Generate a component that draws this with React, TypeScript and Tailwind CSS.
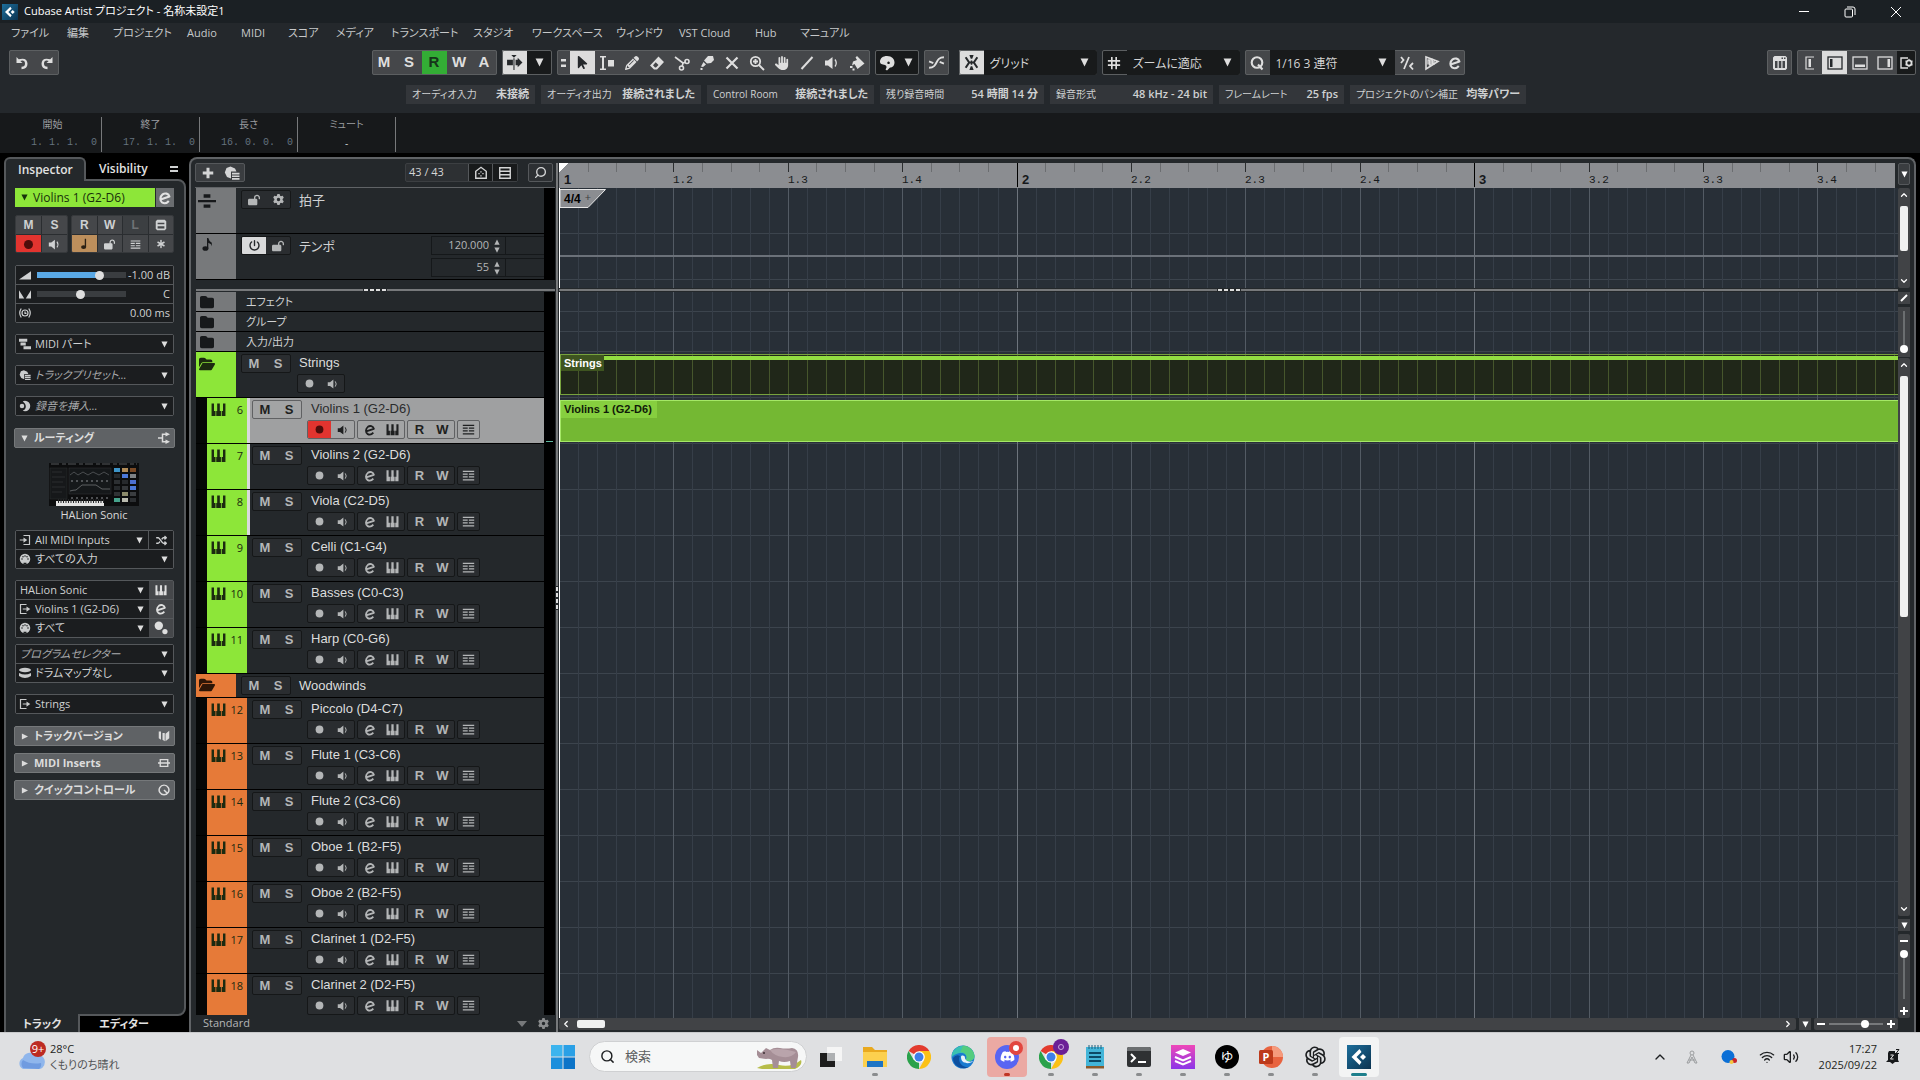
import type { ReactNode } from "react"
import { AiOutlineOpenAI } from "react-icons/ai"
import {
  FaArrowPointer,
  FaDiscord,
  FaFolder,
  FaFolderOpen,
  FaGear,
  FaHand,
  FaLockOpen,
  FaPencil,
  FaPowerOff,
  FaShuffle,
} from "react-icons/fa6"
import { Search, Wifi, Volume2, ChevronUp, ChevronDown, ChevronLeft, ChevronRight, Asterisk } from "lucide-react"

const BEAT = 114.4
const BEATS = 24

const menus = [
  { label: "ファイル", width: "w-14" },
  { label: "編集", width: "w-[46px]" },
  { label: "プロジェクト", width: "w-[74px]" },
  { label: "Audio", width: "w-[54px]" },
  { label: "MIDI", width: "w-[47px]" },
  { label: "スコア", width: "w-12" },
  { label: "メディア", width: "w-[55px]" },
  { label: "トランスポート", width: "w-[82px]" },
  { label: "スタジオ", width: "w-[59px]" },
  { label: "ワークスペース", width: "w-[84px]" },
  { label: "ウィンドウ", width: "w-[63px]" },
  { label: "VST Cloud", width: "w-[76px]" },
  { label: "Hub", width: "w-[45px]" },
  { label: "マニュアル", width: "w-16" },
]

const statusItems = [
  { label: "オーディオ入力", value: "未接続", width: "w-[129px]" },
  { label: "オーディオ出力", value: "接続されました", width: "w-40" },
  { label: "Control Room", value: "接続されました", width: "w-[167px]" },
  { label: "残り録音時間", value: "54 時間 14 分", width: "w-[164px]" },
  { label: "録音形式", value: "48 kHz - 24 bit", width: "w-[163px]" },
  { label: "フレームレート", value: "25 fps", width: "w-[125px]" },
  { label: "プロジェクトのパン補正", value: "均等パワー", width: "w-44" },
]

const infoCells = [
  { label: "開始", value: "1. 1. 1.  0" },
  { label: "終了", value: "17. 1. 1.  0" },
  { label: "長さ", value: "16. 0. 0.  0" },
]

const strings = [
  { no: 6, name: "Violins 1 (G2-D6)", selected: true, marked: true },
  { no: 7, name: "Violins 2 (G2-D6)", marked: true },
  { no: 8, name: "Viola (C2-D5)", marked: true },
  { no: 9, name: "Celli (C1-G4)" },
  { no: 10, name: "Basses (C0-C3)" },
  { no: 11, name: "Harp (C0-G6)" },
]

const woodwinds = [
  { no: 12, name: "Piccolo (D4-C7)" },
  { no: 13, name: "Flute 1 (C3-C6)" },
  { no: 14, name: "Flute 2 (C3-C6)" },
  { no: 15, name: "Oboe 1 (B2-F5)" },
  { no: 16, name: "Oboe 2 (B2-F5)" },
  { no: 17, name: "Clarinet 1 (D2-F5)" },
  { no: 18, name: "Clarinet 2 (D2-F5)" },
]

/* ---------- icons ---------- */

type IconProps = { className?: string }

function Svg({ children, className = "size-4", box = "0 0 16 16" }: { children: ReactNode; className?: string; box?: string }) {
  return (
    <svg viewBox={box} className={`shrink-0 ${className}`} fill="currentColor" aria-hidden="true">
      {children}
    </svg>
  )
}

function Tri({ className = "size-2" }: IconProps) {
  return (
    <Svg className={className} box="0 0 8 8">
      <path d="M0.5 0.5h7L4 7.5z" />
    </Svg>
  )
}

function TriRight({ className = "size-2" }: IconProps) {
  return (
    <Svg className={className} box="0 0 8 8">
      <path d="M1 0.5v7l7-3.5z" />
    </Svg>
  )
}

function EditE({ className = "size-4" }: IconProps) {
  return (
    <Svg className={className}>
      <path d="M3.6 9.6 12.4 6.6C11.6 3.4 8 2.6 5.6 4.4 2.8 6.6 2.8 10.8 5 12.4c2.2 1.4 5 .7 6.8-1.4" fill="none" stroke="currentColor" strokeWidth="2.1" strokeLinejoin="round" />
    </Svg>
  )
}

function Keys({ className = "size-4" }: IconProps) {
  return (
    <Svg className={className}>
      <path d="M.6 1.500h2.600v8h1.600v5.500H.6zM6.600 1.500h2.800v8h1.200v5.500H5.600V9.500h1zM12.800 1.500h2.600v13.500h-4V9.500h1.400z" />
    </Svg>
  )
}

function Speaker({ className = "size-4" }: IconProps) {
  return (
    <Svg className={className}>
      <path d="M1 5.500h3L8.500 2v12L4 10.500H1z" />
      <path d="M11 4.500q2.500 3.500 0 7" fill="none" stroke="currentColor" strokeWidth="1.300" />
    </Svg>
  )
}

function Rec({ className = "size-4" }: IconProps) {
  return (
    <Svg className={className}>
      <circle cx="8" cy="8" r="4.8" />
    </Svg>
  )
}

function Lanes({ className = "size-4" }: IconProps) {
  return (
    <Svg className={className}>
      <path d="M1 2h14v1.600H1zM1 5.500h6v1.600H1zM8.500 5.500H15v1.600H8.500zM1 9h6v1.600H1zM8.500 9H15v1.600H8.500zM1 12.500h14v1.600H1z" />
    </Svg>
  )
}

function Din({ className = "size-4" }: IconProps) {
  return (
    <Svg className={className}>
      <circle cx="8" cy="8" r="7" />
      <g fill="#1b1d1f">
        <circle cx="4" cy="8" r="1" />
        <circle cx="5.300" cy="5" r="1" />
        <circle cx="8" cy="4" r="1" />
        <circle cx="10.700" cy="5" r="1" />
        <circle cx="12" cy="8" r="1" />
        <path d="M6 13h4v2H6z" />
      </g>
    </Svg>
  )
}

function OutPort({ className = "size-4" }: IconProps) {
  return (
    <Svg className={className}>
      <path d="M10 2H2v12h8" fill="none" stroke="currentColor" strokeWidth="1.600" />
      <path d="M5 7.200h5V4.500L15 8l-5 3.500V8.800H5z" />
    </Svg>
  )
}

function InPort({ className = "size-4" }: IconProps) {
  return (
    <Svg className={className}>
      <path d="M6 2h8v12H6" fill="none" stroke="currentColor" strokeWidth="1.600" />
      <path d="M1 7.200h5V4.500L11 8l-5 3.500V8.800H1z" />
    </Svg>
  )
}

function Preset({ className = "size-4" }: IconProps) {
  return (
    <Svg className={className}>
      <path d="M6.500 1.500 11 3.500l1.500 3H7v7L3 12 .800 7.500 2.500 3z" />
      <path d="M8 7.800h7.500v1.700H8zM8 10.400h7.500v1.700H8zM8 13h7.500v1.700H8z" />
    </Svg>
  )
}

function CubaseLogo({ className = "size-4" }: IconProps) {
  return (
    <svg viewBox="0 0 24 24" className={`shrink-0 ${className}`} aria-hidden="true">
      <defs>
        <linearGradient id="cubase" x1="0" y1="0" x2="1" y2="1">
          <stop offset="0" stopColor="#1d6f9c" />
          <stop offset="1" stopColor="#0b3350" />
        </linearGradient>
      </defs>
      <path fill="url(#cubase)" d="M0 0h24v24H0z" />
      <path fill="#fff" d="M12.500 4 4.500 12l8 8 2-3-5-5 5-5z" />
      <path fill="#fff" d="m16 9 3 3-3 3-3-3z" />
    </svg>
  )
}

function ChromeLogo() {
  return (
    <svg viewBox="0 0 24 24" className="size-6" aria-hidden="true">
      <path fill="#e33b2e" d="M12 12 1.600 6A12 12 0 0 1 22.400 6H12z" />
      <path fill="#2aa14b" d="M12 12v12A12 12 0 0 1 1.600 6l5.200 9z" />
      <path fill="#fbc116" d="M12 6h10.400A12 12 0 0 1 12 24l5.200-9z" />
      <circle cx="12" cy="12" r="5.800" fill="#fff" />
      <circle cx="12" cy="12" r="4.500" fill="#3f7fe8" />
    </svg>
  )
}

/* ---------- small parts ---------- */

function ToolButton({ label, children, active, dark, className = "w-[25px]" }: { label: string; children: ReactNode; active?: boolean; dark?: boolean; className?: string }) {
  const tone = active ? "bg-[#dcdcdc] text-[#25282b]" : dark ? "bg-[#181a1b] text-[#dedede]" : "text-[#dedede]"
  return (
    <button type="button" aria-label={label} className={`flex h-full shrink-0 items-center justify-center ${tone} ${className}`}>
      {children}
    </button>
  )
}

function ToolGroup({ children }: { children: ReactNode }) {
  return <div className="flex h-[25px] shrink-0 overflow-hidden rounded-xs bg-[#45474a] outline-1 -outline-offset-1 outline-[#5c5f61]">{children}</div>
}

function ToolSelect({ label, value, className }: { label: string; value: string; className: string }) {
  return (
    <div className={`relative h-full shrink-0 bg-[#181a1b] ${className}`}>
      <select aria-label={label} className="h-full w-full appearance-none bg-transparent pr-6 pl-1.5 text-[12px] text-[#d4d4d4]">
        <option>{value}</option>
      </select>
      <Tri className="pointer-events-none absolute top-2 right-2 size-[9px] text-[#dedede]" />
    </div>
  )
}

function PanelSelect({ label, value, icon, italic, className = "flex-1" }: { label: string; value: string; icon?: ReactNode; italic?: boolean; className?: string }) {
  return (
    <div className={`relative flex h-[18px] min-h-[18px] min-w-0 items-center bg-[#1b1d1f] pl-[3px] ${className}`}>
      {icon && <span className="flex w-4 shrink-0 items-center text-[#c9cbcc]">{icon}</span>}
      <select
        aria-label={label}
        className={`h-full min-w-0 flex-1 appearance-none truncate bg-transparent pr-4 text-[11px] ${italic ? "text-[#a9abad] italic" : "text-[#cfd1d2]"} ${icon ? "" : "pl-px"}`}
      >
        <option>{value}</option>
      </select>
      <Tri className="pointer-events-none absolute top-1.5 right-[5px] size-[7px] text-[#dedede]" />
    </div>
  )
}

function PanelBox({ children, className = "" }: { children: ReactNode; className?: string }) {
  return <div className={`flex flex-col gap-px rounded-xs border border-[#55585b] bg-[#55585b] ${className}`}>{children}</div>
}

function SectionHeader({ title, icon, open, className = "" }: { title: string; icon: ReactNode; open?: boolean; className?: string }) {
  return (
    <button
      type="button"
      aria-expanded={open ? true : false}
      className={`-mx-px flex h-5 items-center rounded-xs border border-[#75787a] bg-[#5f6265] pr-1 pl-1.5 text-[11px] font-bold text-[#dcdcdc] ${className}`}
    >
      {open ? <Tri className="size-[7px]" /> : <TriRight className="size-[7px]" />}
      <span className="ml-1.5 flex-1 text-left">{title}</span>
      {icon}
    </button>
  )
}

function PadButton({ label, children, tone = "bg-[#45474a] text-[#cfd1d2]" }: { label: string; children: ReactNode; tone?: string }) {
  return (
    <button type="button" aria-label={label} className={`flex h-[18px] items-center justify-center font-[Liberation_Sans] text-[12px] font-bold ${tone}`}>
      {children}
    </button>
  )
}

function MiniGroup({ children, light, className = "" }: { children: ReactNode; light?: boolean; className?: string }) {
  return (
    <div className={`flex h-[19px] shrink-0 overflow-hidden rounded-xs border ${light ? "border-[#606163] bg-[#a3a4a5] text-[#1e1f20]" : "border-[#151718] bg-[#2a2d30] text-[#b4b6b7]"} ${className}`}>
      {children}
    </div>
  )
}

function MiniButton({ label, children, className = "" }: { label: string; children: ReactNode; className?: string }) {
  return (
    <button type="button" aria-label={label} className={`flex flex-1 items-center justify-center font-[Liberation_Sans] text-[13px] font-bold ${className}`}>
      {children}
    </button>
  )
}

/* ---------- header ---------- */

function TitleBar() {
  return (
    <header className="flex h-[23px] shrink-0 items-center bg-[#1b2024] pr-4 pl-0.5 text-white">
      <CubaseLogo className="size-4" />
      <h1 className="ml-1.5 flex-1 text-[11px]">Cubase Artist プロジェクト - 名称未設定1</h1>
      <div className="flex gap-[30px]">
        <button type="button" aria-label="最小化" className="flex size-4 items-center justify-center">
          <span className="h-px w-2.5 bg-white" />
        </button>
        <button type="button" aria-label="元に戻す" className="flex size-4 items-center justify-center">
          <svg viewBox="0 0 12 12" className="size-3" fill="none" stroke="currentColor">
            <rect x="1" y="3" width="7.500" height="8" rx="1" />
            <path d="M3 1h6q2 0 2 2v6" />
          </svg>
        </button>
        <button type="button" aria-label="閉じる" className="flex size-4 items-center justify-center">
          <svg viewBox="0 0 12 12" className="size-3" stroke="currentColor">
            <path d="m1 1 10 10M11 1 1 11" />
          </svg>
        </button>
      </div>
    </header>
  )
}

function MenuBar() {
  return (
    <nav className="flex h-5 shrink-0 items-center pl-[11px] text-[11px] text-[#c6c8ca]">
      {menus.map((menu) => (
        <button key={menu.label} type="button" className={`shrink-0 text-left whitespace-nowrap ${menu.width}`}>
          {menu.label}
        </button>
      ))}
    </nav>
  )
}

function Toolbar() {
  return (
    <div className="mt-[7px] flex h-[25px] shrink-0 items-center pr-1 pl-[9px]">
      <ToolGroup>
        <ToolButton label="元に戻す">
          <Svg className="size-4">
            <path d="M2.500 2v6h6L6.300 5.900Q11 4.600 11 8.800 11 11.800 7.500 11.800V14.200Q13.500 14 13.500 8.800 13.300 2 4.700 4.200z" />
          </Svg>
        </ToolButton>
        <ToolButton label="再実行">
          <Svg className="size-4">
            <path d="M13.500 2v6h-6L9.700 5.900Q5 4.600 5 8.800 5 11.800 8.500 11.800V14.200Q2.500 14 2.500 8.800 2.700 2 11.300 4.200z" />
          </Svg>
        </ToolButton>
      </ToolGroup>

      <div className="flex-1" />

      <div className="flex items-center gap-[5px] pl-2.5">
        <ToolGroup>
          {["M", "S", "R", "W", "A"].map((letter) => (
            <button
              key={letter}
              type="button"
              className={`h-full w-[25px] font-[Liberation_Sans] text-[15px] font-bold ${letter === "R" ? "bg-[#33ad35] text-[#16351a]" : "text-[#dedede]"}`}
            >
              {letter}
            </button>
          ))}
        </ToolGroup>
        <ToolGroup>
          <ToolButton label="オートスクロール" active>
            <Svg className="size-[17px]">
              <path d="M1 5.500h5.500v5H1zM9 5.500h2V3.500L15.500 8 11 12.500v-2H9zM5 1h5L7.500 3.500zM7 4h1v11H7z" />
            </Svg>
          </ToolButton>
          <ToolButton label="オートスクロール設定" dark>
            <Tri className="size-[9px]" />
          </ToolButton>
        </ToolGroup>
        <ToolGroup>
          <ToolButton label="ツール" className="w-[13px]">
            <Svg className="size-3" box="0 0 12 12">
              <path d="M4 2h5v2.500H4zM4 7.500h5V10H4z" />
            </Svg>
          </ToolButton>
          <ToolButton label="選択" active>
            <FaArrowPointer size={15} />
          </ToolButton>
          <ToolButton label="範囲選択">
            <Svg>
              <path d="M1 1h6v1.500H5v11h2V15H1v-1.500h2v-11H1zM9 5h6v6.500H9z" />
            </Svg>
          </ToolButton>
          <ToolButton label="鉛筆">
            <FaPencil size={14} />
          </ToolButton>
          <ToolButton label="消しゴム">
            <Svg>
              <path d="M9.500 1.500 15 7l-7 7.500H5L1 10.500zM4 10.200 6 12.500h1L9.500 10 6.700 7.200z" fillRule="evenodd" />
            </Svg>
          </ToolButton>
          <ToolButton label="はさみ">
            <Svg>
              <g fill="none" stroke="currentColor" strokeWidth="1.600">
                <path d="m1 2 8 6 3-1M9 8l-1 4" />
                <circle cx="13" cy="6.500" r="2" />
                <circle cx="7.500" cy="13" r="2" />
              </g>
            </Svg>
          </ToolButton>
          <ToolButton label="のり">
            <Svg>
              <path d="M9 1h5l1 4-3 3-4 .500-3-3zM4.500 7 7 9.500 4 12l-2-.500zM1.500 13h2v2h-2z" />
            </Svg>
          </ToolButton>
          <ToolButton label="ミュート">
            <Svg>
              <path d="m2.500 2.500 11 11M13.500 2.500l-11 11" stroke="currentColor" strokeWidth="2.200" />
            </Svg>
          </ToolButton>
          <ToolButton label="ズーム">
            <Svg>
              <circle cx="6.500" cy="6.500" r="4.700" fill="none" stroke="currentColor" strokeWidth="1.800" />
              <path d="m10 10 5 5M6.500 4v5M4 6.500h5" stroke="currentColor" strokeWidth="1.900" />
            </Svg>
          </ToolButton>
          <ToolButton label="手">
            <FaHand size={14} />
          </ToolButton>
          <ToolButton label="ライン">
            <Svg>
              <path d="M2.500 14 13.500 2" stroke="currentColor" strokeWidth="2" />
            </Svg>
          </ToolButton>
          <ToolButton label="再生">
            <Speaker />
          </ToolButton>
          <ToolButton label="カラー">
            <Svg>
              <path d="M4 6.500 8 5 6.500 2.500 8 1l7.500 7.500L8.500 14 5.500 9 3 10.500zM1 11h2.500v2H1zM3.500 13.500h2v2h-2z" />
            </Svg>
          </ToolButton>
        </ToolGroup>
        <ToolGroup>
          <ToolButton label="カラーメニュー" dark className="w-6">
            <Svg>
              <path d="M1 7C1 3 4 1 8 1c5 0 7.500 3 7.500 6.500 0 3-2 5-4.500 5l-3 3-1.500-1c1.500-2 1.500-3.500-.5-4.500C3 9.500 1 9 1 7m8.500-.5a1.300 1.300 0 1 0 .1 0" fillRule="evenodd" />
            </Svg>
          </ToolButton>
          <ToolButton label="カラー設定" dark className="w-5">
            <Tri className="size-[9px]" />
          </ToolButton>
        </ToolGroup>
        <ToolGroup>
          <ToolButton label="自動クロスフェード">
            <Svg className="size-[17px]">
              <path d="M1 13c9 0 5-10 14-10M1 7l4 1.500M15 9l-4-1.500" fill="none" stroke="currentColor" strokeWidth="1.800" />
            </Svg>
          </ToolButton>
        </ToolGroup>
        <span />
        <ToolGroup>
          <ToolButton label="スナップ" active>
            <Svg className="size-[17px]">
              <path d="M6 1h4L8.700 4.500H7.300zM6 15h4l-1.300-3.500H7.300z" />
              <path d="M7.300 6h1.400v4H7.300z" />
              <path d="m2.500 3 3.300 5-3.300 5M13.500 3l-3.300 5 3.300 5M5 8h6" fill="none" stroke="currentColor" strokeWidth="1.900" />
            </Svg>
          </ToolButton>
          <ToolSelect label="スナップタイプ" value="グリッド" className="w-[113px]" />
        </ToolGroup>
        <ToolGroup>
          <ToolButton label="グリッドの種類" dark>
            <Svg className="size-3.5">
              <path d="M1 5.500h14M1 10.500h14M5.500 1v14M10.500 1v14" stroke="currentColor" strokeWidth="1.900" />
            </Svg>
          </ToolButton>
          <ToolSelect label="グリッドの種類" value="ズームに適応" className="w-[113px]" />
        </ToolGroup>
        <ToolGroup>
          <ToolButton label="クオンタイズ">
            <Svg>
              <circle cx="8" cy="7.500" r="5.300" fill="none" stroke="currentColor" strokeWidth="2.100" />
              <path d="m9 9.500 4.500 5" stroke="currentColor" strokeWidth="2.100" />
            </Svg>
          </ToolButton>
          <ToolSelect label="クオンタイズプリセット" value="1/16  3 連符" className="w-[125px]" />
          <ToolButton label="ソフトクオンタイズ">
            <Svg>
              <path d="m2 2 2.500 3L2 8M10 2 5 14M14 8l-3 3 3 3.500" fill="none" stroke="currentColor" strokeWidth="1.800" />
            </Svg>
          </ToolButton>
          <ToolButton label="オーディオクオンタイズ">
            <Svg>
              <path d="M2 2v12l12-7.500z" fill="none" stroke="currentColor" strokeWidth="1.600" />
              <path d="M4 9.500V5h1.500v5H7V4.500h1.500V9H10V6" fill="none" stroke="currentColor" strokeWidth="1.300" />
            </Svg>
          </ToolButton>
          <ToolButton label="クオンタイズパネル" className="w-5">
            <EditE />
          </ToolButton>
        </ToolGroup>
      </div>

      <div className="flex-1" />

      <div className="flex gap-[5px]">
        <ToolGroup>
          <ToolButton label="オンスクリーンキーボード">
            <Svg>
              <path d="M2.500 1h11L15 2.500v11L13.500 15h-11L1 13.500v-11zM3 6v7h2.500V6zM6.800 6v7h2.500V6zM10.500 6v7H13V6zM9.500 2.500v1.500h1.500V2.500zM12 2.500v1.500h1.500V2.500z" fillRule="evenodd" />
            </Svg>
          </ToolButton>
        </ToolGroup>
        <ToolGroup>
          <ToolButton label="左">
            <Svg className="size-4">
              <path d="M12 2H4v12h8" fill="none" stroke="currentColor" strokeWidth="1.200" />
              <path d="M6.500 4h2.500v8H6.500z" />
            </Svg>
          </ToolButton>
          <ToolButton label="左ゾーン" active>
            <Svg className="h-3.5 w-4" box="0 0 16 14">
              <rect x="1" y="1" width="14" height="12" fill="none" stroke="currentColor" strokeWidth="1.300" />
              <path d="M3 3h2.500v8H3z" />
            </Svg>
          </ToolButton>
          <ToolButton label="下ゾーン">
            <Svg className="h-3.5 w-4" box="0 0 16 14">
              <rect x="1" y="1" width="14" height="12" fill="none" stroke="currentColor" strokeWidth="1.300" />
              <path d="M3 8.500h10V11H3z" />
            </Svg>
          </ToolButton>
          <ToolButton label="右ゾーン">
            <Svg className="h-3.5 w-4" box="0 0 16 14">
              <rect x="1" y="1" width="14" height="12" fill="none" stroke="currentColor" strokeWidth="1.300" />
              <path d="M10.500 3H13v8h-2.500z" />
            </Svg>
          </ToolButton>
          <ToolButton label="レイアウト設定" dark className="w-[19px]">
            <svg viewBox="0 0 14 12" className="h-3 w-3.5" fill="none" stroke="currentColor" strokeWidth="1.400" aria-hidden="true">
              <path d="M8 1H1v10h7" />
              <circle cx="9" cy="6" r="2.600" strokeWidth="1.800" />
              <path d="M9 1.800v8.400M5.300 4l7.400 4M5.300 8l7.400-4" strokeWidth="1" strokeDasharray="1.500 5.400" />
            </svg>
          </ToolButton>
        </ToolGroup>
      </div>
    </div>
  )
}

function StatusLine() {
  return (
    <div className="mt-2.5 mb-[9px] flex h-[19px] shrink-0 justify-center gap-1.5 pl-3 text-[11px] text-[#cfd1d2]">
      {statusItems.map((item) => (
        <div key={item.label} className={`flex items-center justify-between bg-[#33363a] px-1.5 whitespace-nowrap ${item.width}`}>
          <span className="text-[10px]">{item.label}</span>
          <b className="font-semibold">{item.value}</b>
        </div>
      ))}
    </div>
  )
}

function InfoLine() {
  return (
    <div className="flex h-10 shrink-0 bg-[#17191b] pt-1 pb-px pl-1 text-[10px] text-[#9b9da0]">
      {infoCells.map((cell) => (
        <div key={cell.label} className="flex w-[98px] flex-col border-r border-[#77797b] pr-1">
          <span className="pl-1 text-center leading-[14px]">{cell.label}</span>
          <span className="mt-1 text-right font-[Liberation_Mono] leading-4 whitespace-pre text-[#64727f]">{cell.value}</span>
        </div>
      ))}
      <div className="flex w-[98px] flex-col border-r border-[#77797b] text-center">
        <span className="leading-[14px]">ミュート</span>
        <span className="mt-1 leading-4 text-[#cfd1d2]">-</span>
      </div>
    </div>
  )
}

/* ---------- inspector ---------- */

const rangeBase =
  "h-[18px] appearance-none bg-transparent [&::-webkit-slider-runnable-track]:h-1.5 [&::-webkit-slider-thumb]:-mt-px [&::-webkit-slider-thumb]:size-[9px] [&::-webkit-slider-thumb]:appearance-none [&::-webkit-slider-thumb]:rounded-full [&::-webkit-slider-thumb]:bg-[#dedede]"

function PluginThumb() {
  return (
    <svg viewBox="0 0 90 43" className="h-[43px] w-[90px]" role="img" aria-label="HALion Sonic">
      <rect width="90" height="43" fill="#0c0d0e" />
      <path d="M2 1h86" stroke="#55585b" strokeDasharray="8 3 4 2" />
      <rect x="1" y="5" width="17" height="31" fill="#16181a" stroke="#2d3033" strokeWidth=".5" />
      <path d="M3 9h10M3 14h13M3 19h11M3 24h13M3 29h10" stroke="#34373a" strokeWidth=".7" />
      <rect x="20" y="5" width="42" height="26" fill="#15181a" stroke="#34373a" strokeWidth=".5" />
      <path d="m21 12 4-3 4 3 5-3 5 3 5-3 6 3 5-3 5 3" fill="none" stroke="#6d7073" strokeWidth=".6" />
      <path d="M21 28q3-1 6-1l6-5h14l6 4h8" fill="none" stroke="#7d8083" strokeWidth=".7" />
      <path d="M22 18h38M22 35h38" stroke="#63666a" strokeWidth="1.500" strokeDasharray="2 3" />
      <path d="M7 38h48v5H7z" fill="#e4e4e4" />
      <path d="M9 38h46" stroke="#26282a" strokeWidth="4" strokeDasharray="1 1.500" />
      {[5, 11, 17, 23, 29, 35].map((y, i) => (
        <g key={y}>
          <rect x="65" y={y} width="6" height="4" fill={["#3d94c8", "#26292c", "#2c2f32", "#26292c", "#2f3234", "#46a38c"][i]} />
          <rect x="73" y={y} width="6" height="4" fill={["#b08b58", "#4c78d8", "#26292c", "#34373a", "#8b8a6a", "#b9baae"][i]} />
          <rect x="81" y={y} width="6" height="4" fill={["#7a4a26", "#7e8285", "#4c6fd0", "#4c78d8", "#3a3d40", "#2c2f32"][i]} />
        </g>
      ))}
    </svg>
  )
}

function Inspector() {
  return (
    <aside className="ml-1 flex w-[182px] shrink-0 flex-col overflow-hidden pt-1">
      <div className="relative z-10 -mb-0.5 flex h-6 shrink-0 items-center text-[12px] font-semibold text-[#e2e2e2]">
        <button type="button" className="h-6 w-[82px] rounded-t-md border-x-2 border-t-2 border-[#55585b] bg-[#24282b] pl-3 text-left">
          Inspector
        </button>
        <button type="button" className="ml-[13px] w-[57px] text-left">
          Visibility
        </button>
        <button type="button" aria-label="設定" className="ml-3.5 flex h-1.5 w-2 flex-col justify-between">
          <span className="h-0.5 w-full bg-[#cfd1d2]" />
          <span className="h-0.5 w-full bg-[#cfd1d2]" />
        </button>
      </div>

      <div className="flex min-h-0 flex-1 flex-col overflow-hidden rounded-tr-lg rounded-br-lg border-2 border-[#55585b] bg-[#24282b] pt-[7px] pr-2.5 pl-[9px]">
        <div className="flex h-[19px] shrink-0 gap-px">
          <button type="button" className="flex flex-1 items-center bg-[#8de639] pl-1.5 text-[12px] text-[#18300b]">
            <Tri className="mr-[5px] size-[7px]" />
            Violins 1 (G2-D6)
          </button>
          <button type="button" aria-label="チャンネル設定" className="flex w-[18px] items-center justify-center bg-[#6a6d70] text-[#e2e2e2]">
            <EditE />
          </button>
        </div>

        <div className="mt-2 flex h-[38px] shrink-0 gap-[3px]">
          <div className="grid w-[53px] grid-cols-2 gap-px overflow-hidden rounded-xs border border-[#36393c] bg-[#2a2d30]">
            <PadButton label="ミュート">M</PadButton>
            <PadButton label="ソロ">S</PadButton>
            <PadButton label="録音可能" tone="bg-[#e2342f] text-[#4e0d0b]">
              <Rec className="size-[15px]" />
            </PadButton>
            <PadButton label="モニタリング">
              <Speaker className="size-[13px]" />
            </PadButton>
          </div>
          <div className="grid flex-1 grid-cols-4 gap-px overflow-hidden rounded-xs border border-[#36393c] bg-[#2a2d30]">
            <PadButton label="読み込み">R</PadButton>
            <PadButton label="書き込み">W</PadButton>
            <PadButton label="ラッチ" tone="bg-[#3c3f42] text-[#6f7275]">
              L
            </PadButton>
            <PadButton label="インプレイス">
              <Svg className="size-3">
                <path d="M3 1h10l2 2v10l-2 2H3l-2-2V3zM3.500 5v2h9V5zM3.500 9.500v3h9v-3z" fillRule="evenodd" />
              </Svg>
            </PadButton>
            <PadButton label="タイムベース" tone="bg-[#bd8f5c] text-[#2b2014]">
              <Svg className="size-3">
                <path d="M9 1h1.800v11H9z" />
                <ellipse cx="7.500" cy="12" rx="3.400" ry="2.500" />
              </Svg>
            </PadButton>
            <PadButton label="ロック">
              <FaLockOpen size={11} />
            </PadButton>
            <PadButton label="レーン">
              <Lanes className="size-[11px]" />
            </PadButton>
            <PadButton label="フリーズ">
              <Asterisk size={14} strokeWidth={2.5} />
            </PadButton>
          </div>
        </div>

        <PanelBox className="mt-3 shrink-0 text-[11px] text-[#cfd1d2]">
          <label className="flex h-[18px] items-center bg-[#1b1d1f] px-[3px]">
            <Svg className="size-3">
              <path d="M0 14 16 3v11z" />
            </Svg>
            <input
              type="range"
              aria-label="ボリューム"
              defaultValue={73}
              className={`ml-1.5 w-[89px] [&::-webkit-slider-runnable-track]:bg-[linear-gradient(to_right,#5aa9e6_70%,#3a3d40_70%)] ${rangeBase}`}
            />
            <span className="flex-1 text-right whitespace-nowrap">-1.00 dB</span>
          </label>
          <label className="flex h-[18px] items-center bg-[#1b1d1f] px-[3px]">
            <Svg className="size-3">
              <path d="M0 14V3l7 11zM16 14V3L9 14z" />
            </Svg>
            <input type="range" aria-label="パン" defaultValue={49} className={`ml-1.5 w-[89px] [&::-webkit-slider-runnable-track]:bg-[#3a3d40] ${rangeBase}`} />
            <span className="flex-1 text-right">C</span>
          </label>
          <div className="flex h-[18px] items-center bg-[#1b1d1f] px-[3px]">
            <Svg className="size-3">
              <g fill="none" stroke="currentColor" strokeWidth="1.600">
                <circle cx="8" cy="8" r="4" />
                <path d="M3 2Q-1 8 3 14M13 2q4 6 0 12M8 6v2.500h2" />
              </g>
            </Svg>
            <span className="flex-1 text-right">0.00 ms</span>
          </div>
        </PanelBox>

        <PanelBox className="mt-[11px] shrink-0">
          <PanelSelect
            label="パート"
            value="MIDI パート"
            icon={
              <Svg className="size-3">
                <path d="M0 1h11v4H0zM2 6h7v4H2zM6 11h10v4H6z" />
              </Svg>
            }
          />
        </PanelBox>
        <PanelBox className="mt-[11px] shrink-0">
          <div className="flex gap-px">
            <PanelSelect label="プリセット" value="トラックプリセット..." italic icon={<Preset className="size-3" />} />
          </div>
        </PanelBox>
        <PanelBox className="mt-[11px] shrink-0">
          <PanelSelect
            label="録音"
            value="録音を挿入..."
            italic
            icon={
              <Svg className="size-3">
                <circle cx="4" cy="8" r="3" />
                <path d="M8 1a7 7 0 0 1 0 14q-2 0-3-1c5-1 6-8 0-12q1-1 3-1" />
              </Svg>
            }
          />
        </PanelBox>

        <SectionHeader
          open
          title="ルーティング"
          className="mt-3 shrink-0"
          icon={
            <Svg className="size-3">
              <path d="M0 8h6M6 8V3h5M6 8v5h5" fill="none" stroke="currentColor" strokeWidth="2" />
              <path d="m10 0 6 3-6 3zM10 10l6 3-6 3z" />
            </Svg>
          }
        />

        <figure className="mt-[15px] flex shrink-0 flex-col items-center pr-px">
          <PluginThumb />
          <figcaption className="h-[18px] text-[11px] leading-[18px] text-[#d8d8d8]">HALion Sonic</figcaption>
        </figure>

        <PanelBox className="mt-1.5 shrink-0">
          <div className="flex gap-px">
            <PanelSelect label="MIDI 入力" value="All MIDI Inputs" icon={<InPort className="size-3" />} />
            <button type="button" aria-label="入力変換" className="flex w-6 items-center justify-center bg-[#1b1d1f] text-[#cfd1d2]">
              <FaShuffle size={11} />
            </button>
          </div>
          <PanelSelect label="入力チャンネル" value="すべての入力" icon={<Din className="size-3" />} />
        </PanelBox>

        <PanelBox className="mt-[11px] shrink-0">
          <div className="flex">
            <PanelSelect label="インストゥルメント" value="HALion Sonic" />
            <button type="button" aria-label="インストゥルメントを編集" className="flex w-6 items-center justify-center bg-[#45474a] text-[#dedede]">
              <Keys className="size-3" />
            </button>
          </div>
          <div className="flex">
            <PanelSelect label="MIDI 出力" value="Violins 1 (G2-D6)" icon={<OutPort className="size-3" />} />
            <button type="button" aria-label="出力を編集" className="flex w-6 items-center justify-center bg-[#45474a] text-[#dedede]">
              <EditE className="size-3.5" />
            </button>
          </div>
          <div className="flex">
            <PanelSelect label="出力チャンネル" value="すべて" icon={<Din className="size-3" />} />
            <button type="button" aria-label="エクスプレッション" className="flex w-6 items-center justify-center bg-[#45474a] text-[#dedede]">
              <Svg className="size-3.5">
                <circle cx="5.500" cy="5.500" r="4.800" />
                <circle cx="12.500" cy="12" r="3" />
              </Svg>
            </button>
          </div>
        </PanelBox>

        <PanelBox className="mt-1.5 shrink-0">
          <PanelSelect label="プログラム" value="プログラムセレクター" italic />
          <PanelSelect
            label="ドラムマップ"
            value="ドラムマップなし"
            icon={
              <Svg className="size-3">
                <ellipse cx="8" cy="4" rx="8" ry="3" />
                <path d="M0 8q8 4 16 0v4q-8 5-16 0z" />
              </Svg>
            }
          />
        </PanelBox>

        <PanelBox className="mt-[11px] shrink-0">
          <PanelSelect label="出力先" value="Strings" icon={<OutPort className="size-3" />} />
        </PanelBox>

        <SectionHeader
          title="トラックバージョン"
          className="mt-3 shrink-0"
          icon={
            <Svg className="size-3">
              <path d="M1 2h3v11l-3-2zM6 4h3v11l-3-2zM10 5l5-4v10l-5 4z" />
            </Svg>
          }
        />
        <SectionHeader
          title="MIDI Inserts"
          className="mt-[7px] shrink-0"
          icon={
            <Svg className="size-3">
              <path d="M3 3.500h10v9H3zM0 8h16" fill="none" stroke="currentColor" strokeWidth="1.800" />
            </Svg>
          }
        />
        <SectionHeader
          title="クイックコントロール"
          className="mt-[7px] shrink-0"
          icon={
            <Svg className="size-3">
              <path d="M8 8 12 12M8 1.500a6.500 6.500 0 1 0 .1 0" fill="none" stroke="currentColor" strokeWidth="2" />
            </Svg>
          }
        />
      </div>

      <div className="relative z-10 -mt-0.5 flex h-[18px] shrink-0 text-[11px] font-semibold text-[#e2e2e2]">
        <button type="button" className="h-[18px] w-[76px] border-x-2 border-[#55585b] bg-[#24282b] pt-0.5 leading-4">
          トラック
        </button>
        <button type="button" className="h-[18px] w-[88px] pt-0.5 leading-4">
          エディター
        </button>
      </div>
    </aside>
  )
}

/* ---------- track list ---------- */

type Track = { no: number; name: string; selected?: boolean; marked?: boolean }

function TrackRow({ track, color }: { track: Track; color: string }) {
  const light = track.selected
  return (
    <li className={`flex h-[46px] border-b border-black ${light ? "bg-[#9fa0a1]" : "bg-[#24282b]"}`}>
      <div className="w-[11px] shrink-0 bg-[#060707]" />
      <div className={`flex w-10 shrink-0 items-start justify-between px-1 pt-1 text-[11px] leading-4 text-[#1c2a10] ${color}`}>
        <Keys className="size-[15px]" />
        {track.no}
      </div>
      <div className={`mr-px w-[3px] shrink-0 ${track.marked ? "bg-[#d9dadb]" : ""}`} />
      <div className="flex min-w-0 gap-[5px] pt-0.5 pl-px">
        <MiniGroup light={light} className="w-[50px]">
          <MiniButton label="ミュート">M</MiniButton>
          <MiniButton label="ソロ">S</MiniButton>
        </MiniGroup>
        <div className="flex flex-col">
          <span className={`h-5 pl-1 font-[Liberation_Sans] text-[13px] leading-[18px] ${light ? "text-[#2a2b2c]" : "text-[#dcdddd]"}`}>{track.name}</span>
          <div className="flex gap-0.5">
            <MiniGroup light={light} className="w-12">
              <MiniButton label="録音可能" className={light ? "bg-[#e2342f] text-[#4e0d0b]" : ""}>
                <Rec className="size-[13px]" />
              </MiniButton>
              <MiniButton label="モニタリング">
                <Speaker className="size-3" />
              </MiniButton>
            </MiniGroup>
            <MiniGroup light={light} className="w-12">
              <MiniButton label="チャンネル設定">
                <EditE className="size-3.5" />
              </MiniButton>
              <MiniButton label="インストゥルメント">
                <Keys className="size-[13px]" />
              </MiniButton>
            </MiniGroup>
            <MiniGroup light={light} className="w-12">
              <MiniButton label="読み込み">R</MiniButton>
              <MiniButton label="書き込み">W</MiniButton>
            </MiniGroup>
            <MiniGroup light={light} className="w-[23px]">
              <MiniButton label="レーン">
                <Lanes className="size-[13px]" />
              </MiniButton>
            </MiniGroup>
          </div>
        </div>
      </div>
    </li>
  )
}

function TempoField({ label, value }: { label: string; value: string }) {
  return (
    <div className="flex h-[19px] border border-r-0 border-[#15181a] bg-[#24282b]">
      <input aria-label={label} defaultValue={value} className="w-[57px] bg-transparent text-right text-[11px] text-[#b4b6b7]" />
      <span className="flex w-[17px] flex-col items-center justify-center gap-0.5 border-r border-[#15181a] text-[#b4b6b7]">
        <Tri className="size-1.5 rotate-180" />
        <Tri className="size-1.5" />
      </span>
    </div>
  )
}

function Dots({ vertical }: { vertical?: boolean }) {
  return (
    <div className={`flex bg-[#24282b] p-px ${vertical ? "flex-col gap-0.5" : "gap-0.5"}`}>
      {[0, 1, 2, 3].map((i) => (
        <span key={i} className={`bg-[#dedede] ${vertical ? "h-1 w-0.5" : "h-0.5 w-1"}`} />
      ))}
    </div>
  )
}

function TrackList() {
  return (
    <section className="flex w-[365px] shrink-0 flex-col pr-px pl-[5px]">
      <div className="-ml-px flex h-[25px] shrink-0 items-start border-b border-[#606366] pr-0.5 text-[#d4d5d6]">
        <div className="flex h-[19px] w-[50px] rounded-xs border border-[#55585b] bg-[#3a3d40]">
          <MiniButton label="トラックを追加">
            <Svg className="size-3">
              <path d="M6 1h4v5h5v4h-5v5H6v-5H1V6h5z" />
            </Svg>
          </MiniButton>
          <MiniButton label="プリセットを使用">
            <Preset className="size-4" />
          </MiniButton>
        </div>
        <div className="flex-1" />
        <div className="flex h-[19px] w-[113px] rounded-xs border border-[#3c3f42] bg-[#2d3033] text-[11px]">
          <span className="w-[62px] pl-[3px] leading-4">43 / 43</span>
          <button type="button" aria-label="表示" className="flex w-[25px] items-center justify-center border-x border-[#55585b] bg-[#181a1b]">
            <Svg className="size-3.5">
              <path d="M2 14V6l6-4.500L14 6v8z" fill="none" stroke="currentColor" strokeWidth="1.600" />
              <path d="M5 8h1.500v1.500H5zM9.500 8H11v1.500H9.500zM7.200 6h1.500v1.500H7.200zM7.200 10.500h1.500V12H7.200z" />
            </Svg>
          </button>
          <button type="button" aria-label="トラックリスト" className="flex flex-1 items-center justify-center bg-[#181a1b]">
            <Svg className="size-3.5">
              <path d="M2 2h12v12H2zM2 6h12M2 10h12" fill="none" stroke="currentColor" strokeWidth="1.600" />
            </Svg>
          </button>
        </div>
        <button type="button" aria-label="トラックを検索" className="ml-2.5 flex h-[19px] w-[25px] items-center justify-center rounded-xs border border-[#55585b] bg-[#2d3033]">
          <Search size={13} strokeWidth={2.5} className="-scale-x-100" />
        </button>
      </div>

      <div className="flex shrink-0">
        <div className="w-[348px] overflow-hidden bg-[#24282b]">
          <div className="flex h-[46px] border-b border-black">
            <div className="w-10 bg-[#77797b] pt-1 pl-0.5 text-[#17191b]">
              <Svg className="size-[18px]">
                <path d="M0 7h16v2H0zM5 2h6v3H5zM5 11h6v3H5z" />
              </Svg>
            </div>
            <div className="flex gap-2 pt-0.5 pl-[5px]">
              <MiniGroup className="w-[50px]">
                <MiniButton label="ロック">
                  <FaLockOpen size={12} />
                </MiniButton>
                <MiniButton label="設定">
                  <FaGear size={11} />
                </MiniButton>
              </MiniGroup>
              <span className="text-[13px] leading-5 text-[#cfd1d2]">拍子</span>
            </div>
          </div>
          <div className="flex h-[46px] border-b border-black">
            <div className="w-10 shrink-0 bg-[#77797b] pt-1 pl-1 text-[#17191b]">
              <Svg className="size-3.5">
                <path d="M8 0h1.500q.5 3 4 5.500v4L12.500 7 9.500 5.500V12H8z" />
                <ellipse cx="6.200" cy="12" rx="3.400" ry="2.600" />
              </Svg>
            </div>
            <div className="flex w-full gap-2 pt-0.5 pl-[5px]">
              <MiniGroup className="w-[50px]">
                <MiniButton label="有効" className="bg-[#d9dadb] text-[#25282b]">
                  <FaPowerOff size={11} />
                </MiniButton>
                <MiniButton label="ロック">
                  <FaLockOpen size={12} />
                </MiniButton>
              </MiniGroup>
              <span className="flex-1 text-[13px] leading-5 whitespace-nowrap text-[#cfd1d2]">テンポ</span>
              <div className="flex w-[113px] flex-col gap-[3px]">
                <TempoField label="テンポ値" value="120.000" />
                <TempoField label="範囲" value="55" />
              </div>
            </div>
          </div>
        </div>
        <div className="flex-1 bg-black" />
      </div>

      <div className="mt-2 mb-px flex h-[3px] shrink-0 items-center justify-center">
        <span className="h-0.5 flex-1 bg-[#77797b]" />
        <Dots />
        <span className="h-0.5 w-[168px] bg-[#77797b]" />
      </div>

      <div className="flex min-h-0 flex-1 overflow-hidden">
        <ul className="w-[348px] shrink-0 self-start">
          {["エフェクト", "グループ", "入力/出力"].map((name) => (
            <li key={name} className="flex h-5 border-b border-black bg-[#24282b]">
              <div className="flex w-10 items-center bg-[#77797b] pl-1 text-[#17191b]">
                <FaFolder size={14} />
              </div>
              <span className="pl-2.5 text-[11px] leading-5 text-[#cfd1d2]">{name}</span>
            </li>
          ))}
          <li className="flex h-[46px] border-b border-black bg-[#24282b]">
            <div className="w-10 bg-[#8de639] pt-1 pl-[3px] text-[#1c2a10]">
              <FaFolderOpen size={16} />
            </div>
            <div className="flex gap-[6px] pt-0.5 pl-[5px]">
              <MiniGroup className="w-[50px]">
                <MiniButton label="ミュート">M</MiniButton>
                <MiniButton label="ソロ">S</MiniButton>
              </MiniGroup>
              <div>
                <div className="h-5 pl-0.5 font-[Liberation_Sans] text-[13px] leading-[18px] text-[#dcdddd]">Strings</div>
                <MiniGroup className="w-12">
                  <MiniButton label="録音可能">
                    <Rec className="size-[13px]" />
                  </MiniButton>
                  <MiniButton label="モニタリング">
                    <Speaker className="size-3" />
                  </MiniButton>
                </MiniGroup>
              </div>
            </div>
          </li>
          {strings.map((track) => (
            <TrackRow key={track.no} track={track} color="bg-[#8de639]" />
          ))}
          <li className="flex h-6 border-b border-black bg-[#24282b]">
            <div className="w-10 bg-[#e67a38] pt-[3px] pl-[3px] text-[#2d1607]">
              <FaFolderOpen size={16} />
            </div>
            <div className="flex gap-2 pt-0.5 pl-[5px]">
              <MiniGroup className="w-[50px]">
                <MiniButton label="ミュート">M</MiniButton>
                <MiniButton label="ソロ">S</MiniButton>
              </MiniGroup>
              <span className="font-[Liberation_Sans] text-[13px] leading-5 text-[#dcdddd]">Woodwinds</span>
            </div>
          </li>
          {woodwinds.map((track) => (
            <TrackRow key={track.no} track={track} color="bg-[#e67a38]" />
          ))}
        </ul>
        <div className="flex-1 bg-black pt-[149px] pl-0.5">
          <div className="h-px w-[7px] bg-[#5fb8a0]" />
        </div>
      </div>

      <div className="flex h-[17px] shrink-0 items-center pr-1.5 pl-[7px] text-[11px] text-[#b4b6b7]">
        <span className="flex-1">Standard</span>
        <Svg className="mr-[11px] h-1.5 w-2.5 text-[#77797b]" box="0 0 10 6">
          <path d="M0 0h10L5 6z" />
        </Svg>
        <FaGear size={11} className="text-[#8b8d8f]" />
      </div>
    </section>
  )
}

/* ---------- timeline ---------- */

function GridLines({ rows }: { rows: number[] }) {
  const cols = Array.from({ length: BEATS * 6 }, (_, i) => i + 1)
  return (
    <svg className="absolute inset-0 h-full w-full" shapeRendering="crispEdges" aria-hidden="true">
      {rows.map((y) => (
        <rect key={y} x="0" y={y} width="100%" height="1" fill="#3c444d" />
      ))}
      {cols.map((i) => (
        <rect
          key={i}
          x={Math.round((i * BEAT) / 6) - 1}
          y="0"
          width="1"
          height="100%"
          fill={i % 24 === 0 ? "#6d747c" : i % 6 === 0 ? "#535b64" : "#363e48"}
        />
      ))}
    </svg>
  )
}

function Ruler() {
  const ticks = Array.from({ length: BEATS * 4 }, (_, i) => i + 1)
  const labels = Array.from({ length: 12 }, (_, i) => i)
  return (
    <div className="relative mr-[3px] h-[25px] shrink-0 overflow-hidden bg-[#8b8d91] font-[Liberation_Mono]">
      <svg className="absolute inset-0 h-full w-full" shapeRendering="crispEdges" aria-hidden="true">
        {ticks.map((i) => (
          <rect
            key={i}
            x={Math.round((i * BEAT) / 4)}
            y="0"
            width="1"
            height={i % 16 === 0 ? 24 : 9}
            fill={i % 16 === 0 ? "#000" : i % 4 === 0 ? "#2b2d2f" : "#6b6d70"}
          />
        ))}
        <path d="M0 0h9L0 9z" fill="#fff" />
      </svg>
      {labels.map((i) => {
        const bar = Math.floor(i / 4) + 1
        return (
          <span
            key={i}
            className={`absolute bottom-0 leading-4 text-[#17191b] ${i % 4 === 0 ? "pl-[5px] font-[Liberation_Sans] text-[13px] font-bold" : "text-[11px]"}`}
            style={{ left: Math.round(i * BEAT) }}
          >
            {i % 4 === 0 ? bar : `${bar}.${(i % 4) + 1}`}
          </span>
        )
      })}
    </div>
  )
}

function Timeline() {
  const rows = [19, 39, 59, 105, 151, 197, 243, 289, 335, 381, 405, 451, 497, 543, 589, 635, 681]
  const clipCols = Array.from({ length: BEATS * 6 }, (_, i) => i + 1)
  return (
    <section className="flex min-w-0 flex-1 flex-col">
      <Ruler />
      <div className="relative h-[100px] shrink-0 overflow-hidden border-l border-white bg-[#282f37]">
        <GridLines rows={[45, 91]} />
        <div className="absolute top-[67px] right-0 left-0 h-0.5 bg-[#6b7179]" />
        <button type="button" className="absolute top-px left-0 flex h-[19px] w-[47px] items-center">
          <svg viewBox="0 0 47 19" className="absolute inset-0" aria-hidden="true">
            <path d="M0 .500h45.500L28 18.500H0z" fill="#8b8d91" stroke="#e6e6e6" />
          </svg>
          <span className="relative pl-1 font-[Liberation_Sans] text-[12px] font-bold">4/4</span>
          <span className="relative pb-1 pl-1 text-[11px] leading-3 text-[#3c3e40]">+</span>
        </button>
      </div>
      <div className="mb-px flex h-[3px] shrink-0 items-center">
        <span className="h-0.5 flex-1 bg-[#77797b]" />
        <Dots />
        <span className="h-0.5 flex-1 bg-[#77797b]" />
      </div>
      <div className="relative min-h-0 flex-1 overflow-hidden border-l border-white bg-[#282f37]">
        <GridLines rows={rows} />
        <div className="absolute top-[62px] right-0 left-0 h-[41px] overflow-hidden border-y border-l border-[#77a23d] bg-[#202719]">
          <svg className="absolute inset-0 h-full w-full" shapeRendering="crispEdges" aria-hidden="true">
            {clipCols.map((i) => (
              <rect key={i} x={Math.round((i * BEAT) / 6) - 2} y="0" width="1" height="100%" fill="#46562c" />
            ))}
            <rect x="0" y="1" width="100%" height="4" fill="#93dd42" />
          </svg>
          <span className="absolute top-0 left-0 w-[43px] bg-[#3e5420] pl-[3px] font-[Liberation_Sans] text-[11px] leading-4 font-bold text-white">Strings</span>
        </div>
        <div className="absolute top-[108px] right-0 left-0 h-[42px] overflow-hidden border-y border-l border-[#a5e866] bg-[#74b833]">
          <span className="absolute top-0 left-0 w-24 bg-[#86cf3f] pl-[3px] font-[Liberation_Sans] text-[11px] leading-[17px] font-bold whitespace-nowrap text-[#101a08]">
            Violins 1 (G2-D6)
          </span>
        </div>
      </div>
      <div className="mb-0.5 flex h-3 shrink-0 gap-[3px] text-white">
        <div className="flex flex-1 items-center rounded-xs bg-[#414346]">
          <button type="button" aria-label="左へスクロール" className="flex w-[18px] justify-center pr-1">
            <ChevronLeft size={10} strokeWidth={3} />
          </button>
          <div className="h-2 w-7 rounded-xs bg-[#f0f1f1]" />
          <div className="flex-1" />
          <button type="button" aria-label="右へスクロール" className="flex w-4 justify-center">
            <ChevronRight size={10} strokeWidth={3} />
          </button>
        </div>
        <button type="button" aria-label="ズームプリセット" className="flex w-3 items-center justify-center bg-[#414346]">
          <Tri className="size-[7px]" />
        </button>
        <div className="flex w-[84px] items-center justify-between rounded-xs bg-[#414346] px-[3px]">
          <span className="h-0.5 w-2 bg-white" />
          <input
            type="range"
            aria-label="横ズーム"
            defaultValue={70}
            className="h-3 w-[54px] appearance-none bg-transparent [&::-webkit-slider-runnable-track]:h-0.5 [&::-webkit-slider-runnable-track]:bg-[#77797b] [&::-webkit-slider-thumb]:-mt-[3px] [&::-webkit-slider-thumb]:size-2 [&::-webkit-slider-thumb]:appearance-none [&::-webkit-slider-thumb]:rounded-full [&::-webkit-slider-thumb]:bg-white"
          />
          <Svg className="size-2" box="0 0 8 8">
            <path d="M3 0h2v3h3v2H5v3H3V5H0V3h3z" />
          </Svg>
        </div>
      </div>
    </section>
  )
}

function SideScroll() {
  return (
    <div className="flex w-3 shrink-0 flex-col items-stretch pb-3.5 text-white">
      <button type="button" aria-label="ルーラー設定" className="flex h-[22px] shrink-0 items-center justify-center rounded-xs border border-[#55585b] bg-[#3a3d40]">
        <Tri className="size-[7px]" />
      </button>
      <div className="mt-[3px] flex h-[100px] shrink-0 flex-col items-center rounded-xs bg-[#414346] py-0.5">
        <ChevronUp size={10} strokeWidth={3} />
        <div className="mt-1.5 h-[45px] w-2 rounded-xs bg-[#f0f1f1]" />
        <div className="flex-1" />
        <ChevronDown size={10} strokeWidth={3} />
      </div>
      <button type="button" aria-label="編集" className="mt-1 flex h-3 shrink-0 items-center justify-center bg-[#414346]">
        <Svg className="size-2" box="0 0 8 8">
          <path d="M1 7 7 1" stroke="currentColor" strokeWidth="2" />
        </Svg>
      </button>
      <div className="mt-[3px] flex h-[50px] shrink-0 flex-col items-center bg-[#414346] pt-1">
        <span className="h-[34px] w-0.5 bg-[#6b6e70]" />
        <span className="size-2 rounded-full bg-white" />
      </div>
      <div className="mt-px flex min-h-0 flex-1 flex-col items-center rounded-xs bg-[#414346] py-0.5">
        <ChevronUp size={10} strokeWidth={3} />
        <div className="mt-1.5 h-[241px] w-2 rounded-xs bg-[#f0f1f1]" />
        <div className="flex-1" />
        <ChevronDown size={10} strokeWidth={3} />
      </div>
      <button type="button" aria-label="縦ズームプリセット" className="mt-[3px] flex h-3 shrink-0 items-center justify-center bg-[#414346]">
        <Tri className="size-[7px]" />
      </button>
      <div className="mt-[3px] flex h-[84px] shrink-0 flex-col items-center rounded-xs bg-[#414346] pt-1.5 pb-[3px]">
        <span className="h-0.5 w-2 shrink-0 bg-white" />
        <div className="mt-2 flex flex-1 flex-col items-center pb-2">
          <span className="size-2 shrink-0 rounded-full bg-white" />
          <span className="w-0.5 flex-1 bg-[#6b6e70]" />
        </div>
        <Svg className="size-2" box="0 0 8 8">
          <path d="M3 0h2v3h3v2H5v3H3V5H0V3h3z" />
        </Svg>
      </div>
    </div>
  )
}

/* ---------- taskbar ---------- */

function TaskIcon({ label, children, tone = "", mark = "h-[3px] w-1.5 bg-[#8a8c8e]" }: { label: string; children: ReactNode; tone?: string; mark?: string }) {
  return (
    <button type="button" aria-label={label} className={`relative flex h-10 w-10 items-center justify-center rounded-sm ${tone}`}>
      {children}
      <span className={`absolute bottom-px rounded-full ${mark}`} />
    </button>
  )
}

function Taskbar() {
  return (
    <footer className="flex h-12 shrink-0 items-center border-t border-[#c9cacc] bg-[#dfe0e2] text-[11px] text-[#1d1f21]">
      <div className="flex min-w-0 flex-1 items-center pl-[18px]">
        <svg viewBox="0 0 32 32" className="size-8 shrink-0" role="img" aria-label="天気">
          <path d="M6 29a6 6 0 0 1 0-11 7 7 0 0 1 12-3 6 6 0 0 1 5 14z" transform="translate(-1 -1)" fill="#8fb6ec" />
          <path d="M5 27a6 6 0 0 1 0-8q8 5 18 3a6 6 0 0 1-2 6z" fill="#6f9be0" />
          <circle cx="20" cy="8" r="8" fill="#bd2b22" />
          <text x="20" y="12" textAnchor="middle" fontSize="11" fill="#fff" fontFamily="Open Sans">9+</text>
        </svg>
        <div className="leading-4">
          <div>28°C</div>
          <div className="text-[#505254]">くもりのち晴れ</div>
        </div>
      </div>

      <div className="ml-2 flex items-center gap-1">
        <button type="button" aria-label="スタート" className="mr-1.5 flex h-10 w-8 items-center justify-center">
          <svg viewBox="0 0 24 24" className="size-6" aria-hidden="true">
            <path d="M0 0h11.500v11.500H0z" fill="#3cb4ee" />
            <path d="M12.500 0H24v11.500H12.500z" fill="#2aa0e6" />
            <path d="M0 12.500h11.500V24H0z" fill="#1c8fdc" />
            <path d="M12.500 12.500H24V24H12.500z" fill="#0c74c8" />
          </svg>
        </button>
        <label className="flex h-[31px] w-[218px] items-center rounded-full border border-[#cfd0d2] bg-[#f6f7f7] pr-1 pl-2.5">
          <Search size={15} strokeWidth={2.3} />
          <input aria-label="検索" placeholder="検索" className="ml-2.5 min-w-0 flex-1 bg-transparent text-[13px] placeholder:text-[#5c5e60]" />
          <svg viewBox="0 0 46 26" className="h-[26px] w-[46px]" aria-hidden="true">
            <path d="M1 24q10-6 22-3t22-5q2 5-6 9H6z" fill="#b7bd4a" />
            <path d="M1 6 5 9l3-3 2-2 4 2q4-3 10-2t12 0q7 1 6 9l-2 11h-5l-1-7q-6 2-11 0l-1 7h-5l-1-8q-3-2-6-1l-7-1-2-3z" fill="#a58e96" />
            <path d="M14 6q10-3 26 2-4 6-13 5T14 6" fill="#b9a4ab" />
            <circle cx="8" cy="9" r=".9" fill="#33262b" />
          </svg>
        </label>
        <TaskIcon label="タスクビュー" mark="hidden">
          <svg viewBox="0 0 24 24" className="size-6" aria-hidden="true">
            <path d="M8 2h15v14H8z" fill="#f5f5f5" />
            <path d="M1 8h15v14H1z" fill="#1d1d1d" />
            <path d="M8 8h8v8H8z" fill="#aeb0b2" />
          </svg>
        </TaskIcon>
        <TaskIcon label="エクスプローラー">
          <svg viewBox="0 0 24 24" className="size-6" aria-hidden="true">
            <path d="M0 2h9l3 3h12v17H0z" fill="#e9a91f" />
            <path d="M0 7h24v15H0z" fill="#fcd04e" />
            <path d="M4 16h16v6H4z" fill="#1d74c4" />
          </svg>
        </TaskIcon>
        <TaskIcon label="Chrome" mark="hidden">
          <ChromeLogo />
        </TaskIcon>
        <TaskIcon label="Edge" mark="hidden">
          <svg viewBox="0 0 24 24" className="size-6" aria-hidden="true">
            <circle cx="12" cy="12" r="11.500" fill="#1a7bd0" />
            <path d="M1 9A11.500 11.500 0 0 1 23.500 11c0 5-6 6-9 4 2-2 1-7-4-7-4 0-8 2-9.500 4z" fill="#39c1b2" />
            <path d="M12 .500A11.500 11.500 0 0 1 23.500 11c0 5-6 6-9 4 3-3 0-8-5-8z" fill="#5fd06a" opacity=".7" />
            <path d="M9 11c-3 5 2 12 9 11-6 3-16 0-16-9q3-4 7-2" fill="#0d4f9e" />
            <path d="M10 12c0-2 4-2 4 1 0 2 4 5 8 3-2 3-12 4-12-4" fill="#e8f2f8" />
          </svg>
        </TaskIcon>
        <TaskIcon label="Discord" tone="bg-[#eba9a3]" mark="h-[3px] w-1.5 bg-[#c03525]">
          <span className="flex size-6 items-center justify-center rounded-full bg-[#5865f2] text-white">
            <FaDiscord size={15} />
          </span>
          <span className="absolute top-1 right-1 flex size-3.5 items-center justify-center rounded-full bg-[#e2463f]">
            <span className="size-1.5 rounded-full bg-white" />
          </span>
        </TaskIcon>
        <TaskIcon label="Chrome プロファイル">
          <ChromeLogo />
          <span className="absolute top-0.5 right-0.5 flex size-4 items-center justify-center rounded-full bg-[#6b1f96]">
            <span className="size-1.5 rounded-full border border-[#cba6df]" />
          </span>
        </TaskIcon>
        <TaskIcon label="メモ帳">
          <svg viewBox="0 0 20 24" className="h-6 w-5" aria-hidden="true">
            <path d="M1 2h18v20H1z" fill="#43b5d8" />
            <path d="M1 21h18v2.500H1z" fill="#8a5a2c" />
            <path d="M4 0v4M7 0v4M10 0v4M13 0v4M16 0v4" stroke="#1c5f7c" />
            <path d="M4 8h12M4 12h12M4 16h12" stroke="#0d4a66" strokeWidth="2" />
          </svg>
        </TaskIcon>
        <TaskIcon label="ターミナル">
          <svg viewBox="0 0 24 20" className="h-5 w-6" aria-hidden="true">
            <rect width="24" height="20" rx="2" fill="#2f3133" />
            <path d="M0 2q0-2 2-2h20q2 0 2 2v2H0z" fill="#6b6e70" />
            <path d="m4 7 4 4-4 4M11 15h8" fill="none" stroke="#fff" strokeWidth="2" />
          </svg>
        </TaskIcon>
        <TaskIcon label="スタック">
          <svg viewBox="0 0 24 24" className="size-6" aria-hidden="true">
            <defs>
              <linearGradient id="stack" x1="0" y1="0" x2="0" y2="1">
                <stop offset="0" stopColor="#ef48b8" />
                <stop offset="1" stopColor="#8b35e8" />
              </linearGradient>
            </defs>
            <path fill="url(#stack)" d="M0 0h24v24H0z" />
            <path d="m12 4 8 3.500-8 3.500-8-3.500z" fill="#fff" />
            <path d="m4 12 8 3.500 8-3.500M4 16l8 3.500 8-3.500" fill="none" stroke="#fff" strokeWidth="2" />
          </svg>
        </TaskIcon>
        <TaskIcon label="ゆ">
          <span className="flex size-6 items-center justify-center rounded-full bg-black text-[13px] text-white">ゆ</span>
        </TaskIcon>
        <TaskIcon label="PowerPoint">
          <svg viewBox="0 0 24 24" className="size-6" aria-hidden="true">
            <circle cx="13" cy="12" r="11" fill="#e8633f" />
            <path d="M13 1a11 11 0 0 1 11 11H13z" fill="#f59a7c" />
            <rect x="0" y="5" width="14" height="14" rx="1.500" fill="#bd3a1b" />
            <text x="7" y="16" textAnchor="middle" fontSize="11" fontWeight="700" fill="#fff" fontFamily="Open Sans">P</text>
          </svg>
        </TaskIcon>
        <TaskIcon label="ChatGPT">
          <AiOutlineOpenAI size={27} />
        </TaskIcon>
        <TaskIcon label="Cubase" tone="bg-[#f3f4f4]" mark="h-[3px] w-4 bg-[#1d7f8c]">
          <CubaseLogo className="size-6" />
        </TaskIcon>
      </div>

      <div className="flex min-w-0 flex-1 items-center justify-end pr-5">
        <ChevronUp size={16} className="mr-[18px]" />
        <svg viewBox="0 0 12 14" className="mr-[23px] h-3.5 w-3" fill="none" stroke="#9a9c9e" aria-hidden="true">
          <circle cx="6" cy="3" r="2" />
          <path d="M5 5 1 13h2l3-6 3 6h2L7 5M3 10h6" />
        </svg>
        <svg viewBox="0 0 16 14" className="mr-[22px] h-3.5 w-4" aria-hidden="true">
          <circle cx="7" cy="6.500" r="6.500" fill="#0b6fd6" />
          <circle cx="13.500" cy="10.500" r="2.500" fill="#c8252c" />
          <circle cx="10.500" cy="12" r="2" fill="#f4c63d" />
        </svg>
        <Wifi size={16} className="mr-2" />
        <Volume2 size={16} className="mr-5" />
        <div className="mr-[9px] text-right leading-4">
          <div>17:27</div>
          <div>2025/09/22</div>
        </div>
        <svg viewBox="0 0 14 15" className="h-[15px] w-3.5" aria-hidden="true">
          <path d="M3 2h6v2h3v7l1 2H0l2-2V4zM4 13h5l-2.500 2z" fill="#17191b" />
          <path d="M4.500 6h3l-3 4h3" fill="none" stroke="#e6e6e6" />
          <path d="M10 .500h3l-3 4h3" fill="none" stroke="#17191b" />
        </svg>
      </div>
    </footer>
  )
}

export default function App() {
  return (
    <div className="flex h-screen flex-col overflow-hidden bg-black font-['Open_Sans','Noto_Sans_CJK_JP',sans-serif] [font-feature-settings:'palt']">
      <TitleBar />
      <div className="flex shrink-0 flex-col bg-[#24282c]">
        <MenuBar />
        <Toolbar />
        <StatusLine />
      </div>
      <InfoLine />
      <main className="flex min-h-0 flex-1">
        <Inspector />
        <div className="mt-1 mr-1 ml-[3px] flex min-w-0 flex-1 rounded-t-lg border-x-2 border-t-2 border-[#606366] bg-[#24282b] pt-1 pr-1">
          <TrackList />
          <div className="mr-px flex w-0.5 shrink-0 items-center justify-center bg-[#77797b]">
            <Dots vertical />
          </div>
          <Timeline />
          <SideScroll />
        </div>
      </main>
      <Taskbar />
    </div>
  )
}
